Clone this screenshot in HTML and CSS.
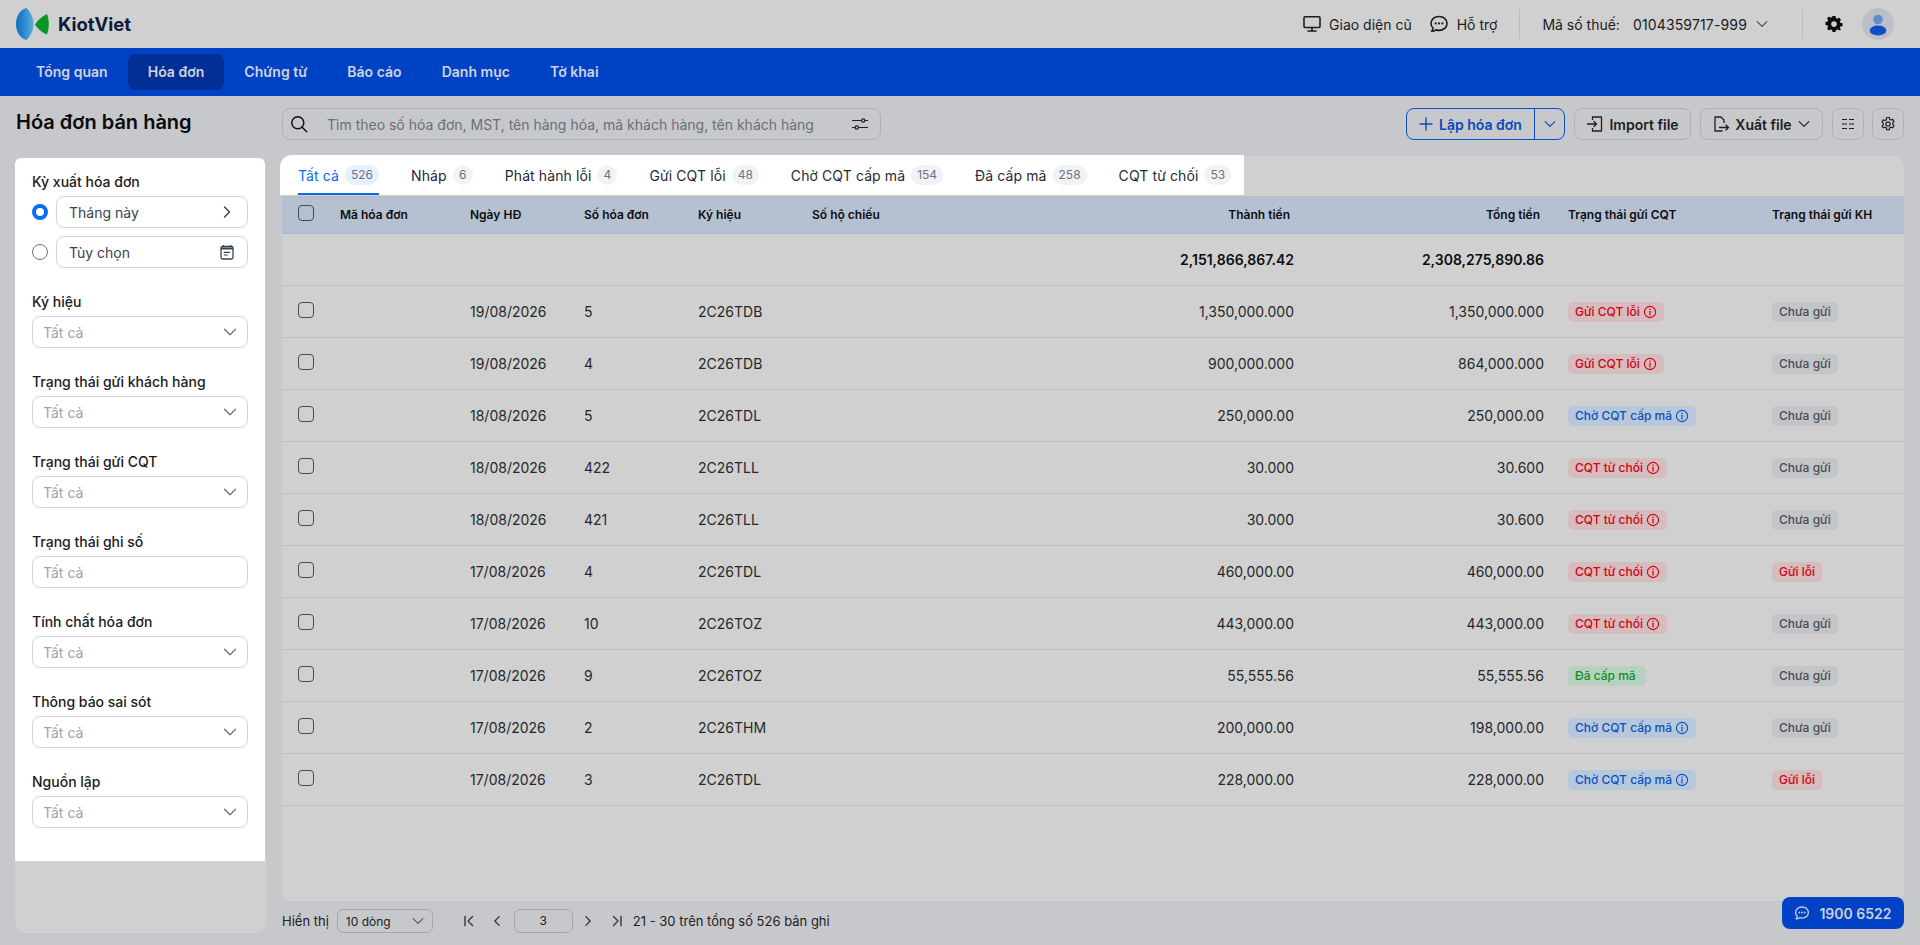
FILE: index.html
```html
<!DOCTYPE html>
<html lang="vi">
<head>
    <meta charset="UTF-8">
    <meta name="viewport" content="width=device-width, initial-scale=1.0">
    <title>Hóa đơn bán hàng</title>
    <link rel="stylesheet" href="styles.css">
</head>
<body>
    <svg class="sprite" xmlns="http://www.w3.org/2000/svg">
        <symbol id="i-chevron-down" viewBox="0 0 16 16"><path d="M2.500 5.200L8 10.700l5.500-5.500" fill="none" stroke="currentColor" stroke-width="1.300" stroke-linecap="round" stroke-linejoin="round"/></symbol>
        <symbol id="i-chevron-right" viewBox="0 0 16 16"><path d="M5.500 3l5 5-5 5" fill="none" stroke="currentColor" stroke-width="1.500" stroke-linecap="round" stroke-linejoin="round"/></symbol>
        <symbol id="i-chevron-left" viewBox="0 0 16 16"><path d="M10.500 3l-5 5 5 5" fill="none" stroke="currentColor" stroke-width="1.500" stroke-linecap="round" stroke-linejoin="round"/></symbol>
        <symbol id="i-info" viewBox="0 0 14 14"><circle cx="7" cy="7" r="5.600" fill="none" stroke="currentColor" stroke-width="1.100"/><path d="M7 6.300v3.600" stroke="currentColor" stroke-width="1.200" stroke-linecap="round"/><circle cx="7" cy="4.300" r=".75" fill="currentColor"/></symbol>
        <symbol id="i-chat" viewBox="0 0 16 16"><path d="M8 2C4.400 2 1.600 4.400 1.600 7.500c0 1.500.6 2.800 1.700 3.800-.1.9-.5 1.700-1.200 2.500 1.400 0 2.600-.4 3.600-1.100.9.3 1.700.4 2.300.4 3.600 0 6.400-2.400 6.400-5.600S11.600 2 8 2z" fill="none" stroke="currentColor" stroke-width="1.300" stroke-linejoin="round"/><circle cx="5.300" cy="7.500" r=".9" fill="currentColor"/><circle cx="8" cy="7.500" r=".9" fill="currentColor"/><circle cx="10.700" cy="7.500" r=".9" fill="currentColor"/></symbol>
    </svg>

    <header class="topbar">
        <a class="logo">
            <svg class="logo-mark" viewBox="0 0 33 32" width="33" height="32">
                <defs>
                    <linearGradient id="logoBlue" x1="0" y1="0" x2="1" y2="0">
                        <stop offset="0" stop-color="#0a6cbc"/>
                        <stop offset="1" stop-color="#58aee2"/>
                    </linearGradient>
                </defs>
                <path d="M10.500 0C4 1.500 0 8.500 0 16s4 14.500 10.500 16C15 27.500 17.500 22 17.500 16S15 4.500 10.500 0z" fill="url(#logoBlue)"/>
                <path d="M19 16.500c2.500-4 6.500-8 12-10.500 1.200 3 1.800 6.500 1.800 10 0 3.700-.6 7.300-1.800 10.500C25.500 24.500 21.500 20.500 19 16.500z" fill="#0a9626"/>
            </svg>
            <span class="logo-text">KiotViet</span>
        </a>
        <div class="topbar-right">
            <a class="top-link">
                <svg width="18" height="18" viewBox="0 0 18 18"><rect x="1" y="1.800" width="16" height="10.700" rx="1.200" fill="none" stroke="currentColor" stroke-width="1.600"/><path d="M9 12.500v3M5 16h8" stroke="currentColor" stroke-width="1.600" stroke-linecap="round"/></svg>
                Giao diện cũ
            </a>
            <a class="top-link top-link-help">
                <svg width="20" height="20"><use href="#i-chat"/></svg>
                Hỗ trợ
            </a>
            <span class="top-divider"></span>
            <div class="tax-code">
                <span>Mã số thuế:</span>
                <span class="tax-value">0104359717-999</span>
                <svg class="tax-chevron" width="14" height="14"><use href="#i-chevron-down"/></svg>
            </div>
            <span class="top-divider top-divider-last"></span>
            <svg class="top-gear" width="18" height="18" viewBox="0 0 18 18"><path fill-rule="evenodd" d="M7.500 1h3l.4 2.100 1.400.6L14 2.500 16 4.600l-1.200 1.700.6 1.400 2.100.4v3l-2.100.4-.6 1.400 1.200 1.700L14 15.500l-1.700-1.200-1.400.6-.4 2.100h-3l-.4-2.100-1.400-.6L4 15.500 2 13.400l1.200-1.700-.6-1.400L.5 9.900v-3l2.100-.4.6-1.400L2 3.400 4 1.400l1.700 1.200 1.400-.6zM9 6.200a2.800 2.800 0 100 5.600 2.800 2.800 0 000-5.600z" fill="#0c0c0c" transform="translate(0 .1)"/></svg>
            <span class="avatar">
                <svg width="18" height="22" viewBox="0 0 18 22"><circle cx="9" cy="5.500" r="4.800" fill="#5f8fd0"/><ellipse cx="9" cy="16.500" rx="8.300" ry="5" fill="#0a4fc4"/></svg>
            </span>
        </div>
    </header>

    <nav class="mainnav">
        <a class="nav-item">Tổng quan</a>
        <a class="nav-item active">Hóa đơn</a>
        <a class="nav-item">Chứng từ</a>
        <a class="nav-item">Báo cáo</a>
        <a class="nav-item">Danh mục</a>
        <a class="nav-item">Tờ khai</a>
    </nav>

    <main class="page">
        <div class="left-col">
            <h1 class="page-title">Hóa đơn bán hàng</h1>
            <aside class="side-panel">
                <div class="filters">
                    <div class="filter-group">
                        <label class="filter-label">Kỳ xuất hóa đơn</label>
                        <div class="radio-row">
                            <span class="radio checked"></span>
                            <div class="field field-dark">Tháng này <svg width="16" height="16"><use href="#i-chevron-right"/></svg></div>
                        </div>
                        <div class="radio-row">
                            <span class="radio"></span>
                            <div class="field field-dark">Tùy chọn
                                <svg width="16" height="16" viewBox="0 0 16 16"><path d="M4.500 1v2M11.500 1v2" stroke="#3a4250" stroke-width="1.400"/><rect x="2" y="2.500" width="12" height="12.500" rx="1.500" fill="none" stroke="#3a4250" stroke-width="1.300"/><path d="M2 3.500h12v2H2z" fill="#3a4250"/><path d="M4.800 8.300h6.400M4.800 11h4" stroke="#3a4250" stroke-width="1.200"/></svg>
                            </div>
                        </div>
                    </div>
                    <div class="filter-group">
                        <label class="filter-label">Ký hiệu</label>
                        <div class="field">Tất cả <svg width="16" height="16"><use href="#i-chevron-down"/></svg></div>
                    </div>
                    <div class="filter-group">
                        <label class="filter-label">Trạng thái gửi khách hàng</label>
                        <div class="field">Tất cả <svg width="16" height="16"><use href="#i-chevron-down"/></svg></div>
                    </div>
                    <div class="filter-group">
                        <label class="filter-label">Trạng thái gửi CQT</label>
                        <div class="field">Tất cả <svg width="16" height="16"><use href="#i-chevron-down"/></svg></div>
                    </div>
                    <div class="filter-group">
                        <label class="filter-label">Trạng thái ghi số</label>
                        <div class="field">Tất cả</div>
                    </div>
                    <div class="filter-group">
                        <label class="filter-label">Tính chất hóa đơn</label>
                        <div class="field">Tất cả <svg width="16" height="16"><use href="#i-chevron-down"/></svg></div>
                    </div>
                    <div class="filter-group">
                        <label class="filter-label">Thông báo sai sót</label>
                        <div class="field">Tất cả <svg width="16" height="16"><use href="#i-chevron-down"/></svg></div>
                    </div>
                    <div class="filter-group">
                        <label class="filter-label">Nguồn lập</label>
                        <div class="field">Tất cả <svg width="16" height="16"><use href="#i-chevron-down"/></svg></div>
                    </div>
                </div>
            </aside>
        </div>

        <div class="right-col">
            <div class="toolbar">
                <div class="search">
                    <svg width="18" height="18" viewBox="0 0 18 18"><circle cx="7.800" cy="7.800" r="6" fill="none" stroke="#111" stroke-width="1.500"/><path d="M12.200 12.200l4.500 4.500" stroke="#111" stroke-width="1.500" stroke-linecap="round"/></svg>
                    <span class="search-text">Tìm theo số hóa đơn, MST, tên hàng hóa, mã khách hàng, tên khách hàng</span>
                    <svg width="18" height="18" viewBox="0 0 18 18"><path d="M1.500 5.500h9M14 5.500h2.500M1.500 12.500H4M7.500 12.500h9" stroke="#222" stroke-width="1.200" stroke-linecap="round"/><circle cx="12.200" cy="5.500" r="1.700" fill="none" stroke="#222" stroke-width="1.200"/><circle cx="5.800" cy="12.500" r="1.700" fill="none" stroke="#222" stroke-width="1.200"/></svg>
                </div>
                <div class="actions">
                    <div class="btn-split">
                        <button class="btn-main">
                            <svg width="14" height="14" viewBox="0 0 14 14"><path d="M7 1v12M1 7h12" stroke="currentColor" stroke-width="1.400" stroke-linecap="round"/></svg>
                            Lập hóa đơn
                        </button>
                        <button class="btn-caret"><svg width="14" height="14"><use href="#i-chevron-down"/></svg></button>
                    </div>
                    <button class="btn btn-import">
                        <svg width="18" height="18" viewBox="0 0 18 18"><path d="M6.500 5V2h9v14h-9v-3" fill="none" stroke="currentColor" stroke-width="1.300" stroke-linejoin="round"/><path d="M1.500 9h9M8 6.500L10.500 9 8 11.500" fill="none" stroke="currentColor" stroke-width="1.300" stroke-linecap="round" stroke-linejoin="round"/></svg>
                        Import file
                    </button>
                    <button class="btn btn-export">
                        <svg width="18" height="18" viewBox="0 0 18 18"><path d="M10.500 16H3V2h6l3 3v3" fill="none" stroke="currentColor" stroke-width="1.300" stroke-linejoin="round"/><path d="M7.500 12.500h9M14 10l2.500 2.500L14 15" fill="none" stroke="currentColor" stroke-width="1.300" stroke-linecap="round" stroke-linejoin="round"/></svg>
                        Xuất file
                        <svg width="14" height="14"><use href="#i-chevron-down"/></svg>
                    </button>
                    <button class="btn btn-icon">
                        <svg width="16" height="16" viewBox="0 0 16 16"><path d="M2 3.500h5M9 3.500h5M2 8h5M9 8h5M2 12.500h5M9 12.500h5" stroke="currentColor" stroke-width="1.200"/></svg>
                    </button>
                    <button class="btn btn-icon btn-settings">
                        <svg width="16" height="16" viewBox="0 0 16 16"><path d="M6.700 1.500h2.600l.4 1.800 1.300.7 1.700-.6 1.300 2.200-1.300 1.300v1.400l1.300 1.300-1.300 2.200-1.700-.6-1.300.7-.4 1.800H6.700l-.4-1.800-1.300-.7-1.700.6L2 10.100l1.300-1.300V7.400L2 6.100l1.300-2.200 1.700.6 1.300-.7z" fill="none" stroke="currentColor" stroke-width="1.200" stroke-linejoin="round"/><circle cx="8" cy="8" r="2.100" fill="none" stroke="currentColor" stroke-width="1.200"/></svg>
                    </button>
                </div>
            </div>

            <section class="panel">
                <div class="tabs">
                    <a class="tab active">Tất cả <span class="count">526</span></a>
                    <a class="tab">Nháp <span class="count">6</span></a>
                    <a class="tab">Phát hành lỗi <span class="count">4</span></a>
                    <a class="tab">Gửi CQT lỗi <span class="count">48</span></a>
                    <a class="tab">Chờ CQT cấp mã <span class="count">154</span></a>
                    <a class="tab">Đã cấp mã <span class="count">258</span></a>
                    <a class="tab">CQT từ chối <span class="count">53</span></a>
                </div>
                <table class="invoice-table">
                    <colgroup>
                        <col class="col-check">
                        <col class="col-code">
                        <col class="col-mid">
                        <col class="col-mid">
                        <col class="col-mid">
                        <col class="col-passport">
                        <col class="col-money">
                        <col class="col-money">
                        <col class="col-status">
                        <col>
                    </colgroup>
                    <thead>
                        <tr>
                            <th class="cell-check"><span class="checkbox"></span></th>
                            <th>Mã hóa đơn</th>
                            <th>Ngày HĐ</th>
                            <th>Số hóa đơn</th>
                            <th>Ký hiệu</th>
                            <th>Số hộ chiếu</th>
                            <th class="num">Thành tiền</th>
                            <th class="num">Tổng tiền</th>
                            <th>Trạng thái gửi CQT</th>
                            <th>Trạng thái gửi KH</th>
                        </tr>
                    </thead>
                    <tbody>
                        <tr class="totals">
                            <td colspan="6"></td>
                            <td class="num">2,151,866,867.42</td>
                            <td class="num">2,308,275,890.86</td>
                            <td colspan="2"></td>
                        </tr>
                        <tr>
                            <td class="cell-check"><span class="checkbox"></span></td><td></td><td>19/08/2026</td><td>5</td><td>2C26TDB</td><td></td>
                            <td class="num">1,350,000.000</td><td class="num">1,350,000.000</td>
                            <td><span class="badge red">Gửi CQT lỗi <svg width="14" height="14"><use href="#i-info"/></svg></span></td>
                            <td><span class="badge gray">Chưa gửi</span></td>
                        </tr>
                        <tr>
                            <td class="cell-check"><span class="checkbox"></span></td><td></td><td>19/08/2026</td><td>4</td><td>2C26TDB</td><td></td>
                            <td class="num">900,000.000</td><td class="num">864,000.000</td>
                            <td><span class="badge red">Gửi CQT lỗi <svg width="14" height="14"><use href="#i-info"/></svg></span></td>
                            <td><span class="badge gray">Chưa gửi</span></td>
                        </tr>
                        <tr>
                            <td class="cell-check"><span class="checkbox"></span></td><td></td><td>18/08/2026</td><td>5</td><td>2C26TDL</td><td></td>
                            <td class="num">250,000.00</td><td class="num">250,000.00</td>
                            <td><span class="badge blue">Chờ CQT cấp mã <svg width="14" height="14"><use href="#i-info"/></svg></span></td>
                            <td><span class="badge gray">Chưa gửi</span></td>
                        </tr>
                        <tr>
                            <td class="cell-check"><span class="checkbox"></span></td><td></td><td>18/08/2026</td><td>422</td><td>2C26TLL</td><td></td>
                            <td class="num">30.000</td><td class="num">30.600</td>
                            <td><span class="badge red">CQT từ chối <svg width="14" height="14"><use href="#i-info"/></svg></span></td>
                            <td><span class="badge gray">Chưa gửi</span></td>
                        </tr>
                        <tr>
                            <td class="cell-check"><span class="checkbox"></span></td><td></td><td>18/08/2026</td><td>421</td><td>2C26TLL</td><td></td>
                            <td class="num">30.000</td><td class="num">30.600</td>
                            <td><span class="badge red">CQT từ chối <svg width="14" height="14"><use href="#i-info"/></svg></span></td>
                            <td><span class="badge gray">Chưa gửi</span></td>
                        </tr>
                        <tr>
                            <td class="cell-check"><span class="checkbox"></span></td><td></td><td>17/08/2026</td><td>4</td><td>2C26TDL</td><td></td>
                            <td class="num">460,000.00</td><td class="num">460,000.00</td>
                            <td><span class="badge red">CQT từ chối <svg width="14" height="14"><use href="#i-info"/></svg></span></td>
                            <td><span class="badge red">Gửi lỗi</span></td>
                        </tr>
                        <tr>
                            <td class="cell-check"><span class="checkbox"></span></td><td></td><td>17/08/2026</td><td>10</td><td>2C26TOZ</td><td></td>
                            <td class="num">443,000.00</td><td class="num">443,000.00</td>
                            <td><span class="badge red">CQT từ chối <svg width="14" height="14"><use href="#i-info"/></svg></span></td>
                            <td><span class="badge gray">Chưa gửi</span></td>
                        </tr>
                        <tr>
                            <td class="cell-check"><span class="checkbox"></span></td><td></td><td>17/08/2026</td><td>9</td><td>2C26TOZ</td><td></td>
                            <td class="num">55,555.56</td><td class="num">55,555.56</td>
                            <td><span class="badge green">Đã cấp mã</span></td>
                            <td><span class="badge gray">Chưa gửi</span></td>
                        </tr>
                        <tr>
                            <td class="cell-check"><span class="checkbox"></span></td><td></td><td>17/08/2026</td><td>2</td><td>2C26THM</td><td></td>
                            <td class="num">200,000.00</td><td class="num">198,000.00</td>
                            <td><span class="badge blue">Chờ CQT cấp mã <svg width="14" height="14"><use href="#i-info"/></svg></span></td>
                            <td><span class="badge gray">Chưa gửi</span></td>
                        </tr>
                        <tr>
                            <td class="cell-check"><span class="checkbox"></span></td><td></td><td>17/08/2026</td><td>3</td><td>2C26TDL</td><td></td>
                            <td class="num">228,000.00</td><td class="num">228,000.00</td>
                            <td><span class="badge blue">Chờ CQT cấp mã <svg width="14" height="14"><use href="#i-info"/></svg></span></td>
                            <td><span class="badge red">Gửi lỗi</span></td>
                        </tr>
                    </tbody>
                </table>
            </section>

            <div class="pager">
                <span>Hiển thị</span>
                <div class="page-size">10 dòng <svg width="14" height="14"><use href="#i-chevron-down"/></svg></div>
                <div class="page-nav">
                    <svg width="14" height="14" viewBox="0 0 14 14"><path d="M3 2.500v9M10.500 2.500L6 7l4.500 4.500" fill="none" stroke="currentColor" stroke-width="1.400" stroke-linecap="round" stroke-linejoin="round"/></svg>
                    <svg class="page-prev" width="14" height="14"><use href="#i-chevron-left"/></svg>
                    <div class="page-input">3</div>
                    <svg class="page-next" width="14" height="14"><use href="#i-chevron-right"/></svg>
                    <svg class="page-last" width="14" height="14" viewBox="0 0 14 14"><path d="M11 2.500v9M3.500 2.500L8 7l-4.500 4.500" fill="none" stroke="currentColor" stroke-width="1.400" stroke-linecap="round" stroke-linejoin="round"/></svg>
                </div>
                <span class="page-info">21 - 30 trên tổng số 526 bản ghi</span>
            </div>
        </div>
    </main>

    <a class="hotline">
        <svg width="16" height="16"><use href="#i-chat"/></svg>
        1900 6522
    </a>
</body>
</html>
```

FILE: styles.css
```css
* {
    box-sizing: border-box;
}

body {
    font-family: Inter, "Noto Sans", sans-serif;
    font-size: 14px;
    height: 100vh;
    margin: 0;
    overflow: hidden;
    background-color: #c7c8cb;
    color: #1b1c1e;
    display: flex;
    flex-direction: column;
}

.sprite {
    display: none;
}

/* top bar */
.topbar {
    height: 48px;
    background-color: #d0d0d0;
    display: flex;
    justify-content: space-between;
    align-items: center;
    padding: 0 26px 0 16px;
}

.logo {
    display: flex;
    align-items: center;
    gap: 9px;
}

.logo-text {
    font-size: 18.500px;
    font-weight: 700;
    color: #0c1b3d;
}

.topbar-right {
    display: flex;
    align-items: center;
}

.top-link {
    display: flex;
    align-items: center;
    gap: 8px;
    color: #1b1c1e;
}

.top-link-help {
    margin-left: 17px;
}

.top-divider {
    width: 1px;
    height: 30px;
    background-color: #bcbcbc;
    margin: 0 22px;
}

.tax-code {
    display: flex;
    align-items: center;
    gap: 12px;
}

.tax-value {
    margin-left: 1px;
    letter-spacing: 0.15px;
}

.tax-chevron {
    margin-left: -4px;
    margin-right: 11px;
    color: #4c4c4c;
}

.top-gear {
    margin-right: 19px;
}

.avatar {
    width: 32px;
    height: 32px;
    border-radius: 50%;
    background-color: #bcc0c6;
    display: flex;
    justify-content: center;
    align-items: flex-end;
    padding-bottom: 4px;
}

/* main nav */
.mainnav {
    height: 48px;
    background-color: #0042c6;
    display: flex;
    align-items: center;
    padding-left: 16px;
}

.nav-item {
    height: 36px;
    line-height: 36px;
    padding: 0 20px;
    border-radius: 8px;
    color: #cfd3dc;
    font-weight: 600;
    letter-spacing: 0.025px;
}

.nav-item.active {
    background-color: #012f96;
}

/* page */
.page {
    flex: 1;
    display: flex;
    gap: 16px;
    padding: 12px 16px 12px 15px;
    min-height: 0;
}

.left-col {
    width: 251px;
    display: flex;
    flex-direction: column;
}

.page-title {
    margin: 0 0 22px 1px;
    font-size: 20px;
    line-height: 28px;
    font-weight: 600;
    color: #0b0b0c;
    white-space: nowrap;
}

.side-panel {
    flex: 1;
    background-color: #d0d0d0;
    border-radius: 12px;
}

.filters {
    background: white;
    width: 250px;
    height: 703px;
    padding: 14px 17px;
    border-radius: 6px 6px 0 0;
    display: flex;
    flex-direction: column;
    gap: 24px;
}

.filter-label {
    display: block;
    margin-bottom: 4px;
    line-height: 20px;
    font-weight: 500;
    color: #1a1c20;
}

.radio-row {
    display: flex;
    align-items: center;
    gap: 8px;
    margin-bottom: 8px;
}

.radio-row:last-child {
    margin-bottom: 0;
}

.radio {
    width: 16px;
    height: 16px;
    border-radius: 50%;
    border: 1px solid #6b7280;
    flex-shrink: 0;
}

.radio.checked {
    border: 4.500px solid #0a6cf5;
}

.field {
    flex: 1;
    height: 32px;
    border: 1px solid #d1d5db;
    border-radius: 8px;
    display: flex;
    justify-content: space-between;
    align-items: center;
    padding: 0 9px 0 10px;
    color: #9ca3af;
}

.field svg {
    color: #6b7280;
}

.field-dark {
    color: #374151;
    padding: 0 12px;
}

.field-dark svg {
    color: #3a4250;
}

.right-col {
    flex: 1;
    min-width: 0;
    display: flex;
    flex-direction: column;
}

/* toolbar */
.toolbar {
    display: flex;
    justify-content: space-between;
    margin-bottom: 16px;
}

.search {
    width: 599px;
    height: 32px;
    border: 1px solid #b0b1b3;
    border-radius: 8px;
    display: flex;
    align-items: center;
    padding: 0 11px 0 7px;
    color: #6a6f76;
}

.search-text {
    flex: 1;
    margin-left: 19px;
    white-space: nowrap;
}

.actions {
    display: flex;
    gap: 9px;
}

button {
    font-family: inherit;
    font-size: 14px;
    font-weight: 600;
    cursor: pointer;
    background: transparent;
}

.btn-split {
    display: flex;
    height: 32px;
    border: 1px solid #0a4fc4;
    border-radius: 8px;
    color: #0a48bd;
    width: 159px;
}

.btn-split button {
    border: none;
    color: inherit;
    padding: 0;
    display: flex;
    align-items: center;
}

.btn-main {
    width: 128px;
    justify-content: center;
    gap: 6px;
    border-right: 1px solid #0a4fc4 !important;
}

.btn-caret {
    flex: 1;
    justify-content: center;
}

.btn {
    height: 32px;
    border: 1px solid #b0b1b3;
    border-radius: 8px;
    display: flex;
    align-items: center;
    justify-content: center;
    gap: 5px;
    padding: 0;
    color: #1e1f22;
}

.btn-import {
    width: 117px;
}

.btn-export {
    width: 123px;
}

.btn-icon {
    width: 32px;
}

.btn-settings {
    margin-left: -1px;
}

/* panel with tabs and table */
.panel {
    flex: 1;
    min-height: 0;
    background-color: #d0d0d0;
    border-radius: 12px 12px 8px 8px;
}

.tabs {
    width: fit-content;
    height: 40px;
    margin: -1px 0 0 -2px;
    padding: 0 13px 0 18px;
    background: white;
    border-radius: 12px 0 0 0;
    display: flex;
    gap: 32px;
}

.tab {
    height: 40px;
    display: flex;
    align-items: center;
    gap: 6px;
    color: #1f2937;
    white-space: nowrap;
    letter-spacing: 0.1px;
}

.tab.active {
    color: #0a6cf5;
    box-shadow: inset 0 -2px 0 #0a6cf5;
}

.count {
    min-width: 20px;
    height: 20px;
    line-height: 20px;
    padding: 0 6px;
    border-radius: 10px;
    background-color: #f1f2f4;
    color: #6b7280;
    font-size: 12px;
    text-align: center;
    letter-spacing: 0;
}

.tab.active .count {
    background-color: #e6f1ff;
}

.invoice-table {
    width: 100%;
    margin-top: 1px;
    border-collapse: separate;
    border-spacing: 0;
    table-layout: fixed;
}

.col-check {
    width: 46px;
}

.col-code {
    width: 130px;
}

.col-mid {
    width: 114px;
}

.col-passport {
    width: 256px;
}

.col-money {
    width: 250px;
}

.col-status {
    width: 204px;
}

.invoice-table th {
    height: 38px;
    padding: 0 12px 2px;
    background-color: #b5c1d0;
    border-top: 1px solid #bcbcbc;
    border-bottom: 1px solid #a3b8d6;
    font-size: 12px;
    font-weight: 600;
    color: #0d0e10;
    text-align: left;
}

.invoice-table td {
    height: 52px;
    padding: 0 12px;
    border-bottom: 1px solid #bdbdbd;
    color: #26272a;
    white-space: nowrap;
}

.invoice-table .cell-check {
    padding: 0 0 4px 16px;
    line-height: 0;
}

.invoice-table th.num {
    padding-right: 16px;
}

.num {
    text-align: right !important;
}

.invoice-table .totals td {
    font-weight: 600;
    color: #0d0e10;
}

.checkbox {
    display: inline-block;
    width: 16px;
    height: 16px;
    border: 1px solid #474a50;
    border-radius: 4px;
}

.badge {
    display: inline-flex;
    align-items: center;
    gap: 3px;
    height: 20px;
    padding: 0 7px;
    border-radius: 5px;
    font-size: 12px;
    font-weight: 500;
    vertical-align: middle;
}

.badge.red {
    background-color: #d5bcbf;
    color: #d4000d;
}

.badge.blue {
    background-color: #b8c8db;
    color: #0a4fc4;
}

.badge.gray {
    background-color: #c3c5c8;
    color: #474d58;
}

.badge.green {
    min-width: 78px;
    background-color: #b7d0bf;
    color: #0a9028;
}

/* pagination */
.pager {
    height: 24px;
    margin-top: 8px;
    display: flex;
    align-items: center;
    font-size: 13px;
    color: #1f2023;
}

.page-size {
    width: 96px;
    height: 24px;
    margin-left: 8px;
    border: 1px solid #a6a7aa;
    border-radius: 6px;
    display: flex;
    align-items: center;
    justify-content: space-between;
    padding: 0 7px 0 8px;
    font-size: 12px;
}

.page-size svg {
    color: #55585e;
}

.page-nav {
    display: flex;
    align-items: center;
    gap: 12px;
    margin-left: 29px;
}

.page-nav svg {
    color: #33353a;
}

.page-prev {
    margin-left: 2px;
}

.page-input {
    width: 59px;
    height: 24px;
    line-height: 22px;
    margin-left: -2px;
    border: 1px solid #a6a7aa;
    border-radius: 6px;
    text-align: center;
    font-size: 12px;
}

.page-next {
    margin-left: -4px;
}

.page-last {
    margin-left: 3px;
}

.page-info {
    margin-left: 9px;
    white-space: nowrap;
}

/* hotline button over the corner */
.hotline {
    position: absolute;
    right: 16px;
    bottom: 16px;
    width: 122px;
    height: 32px;
    background-color: #0042c6;
    border-radius: 8px;
    display: flex;
    align-items: center;
    justify-content: center;
    gap: 9px;
    color: #ccd0da;
    font-weight: 600;
}
```
